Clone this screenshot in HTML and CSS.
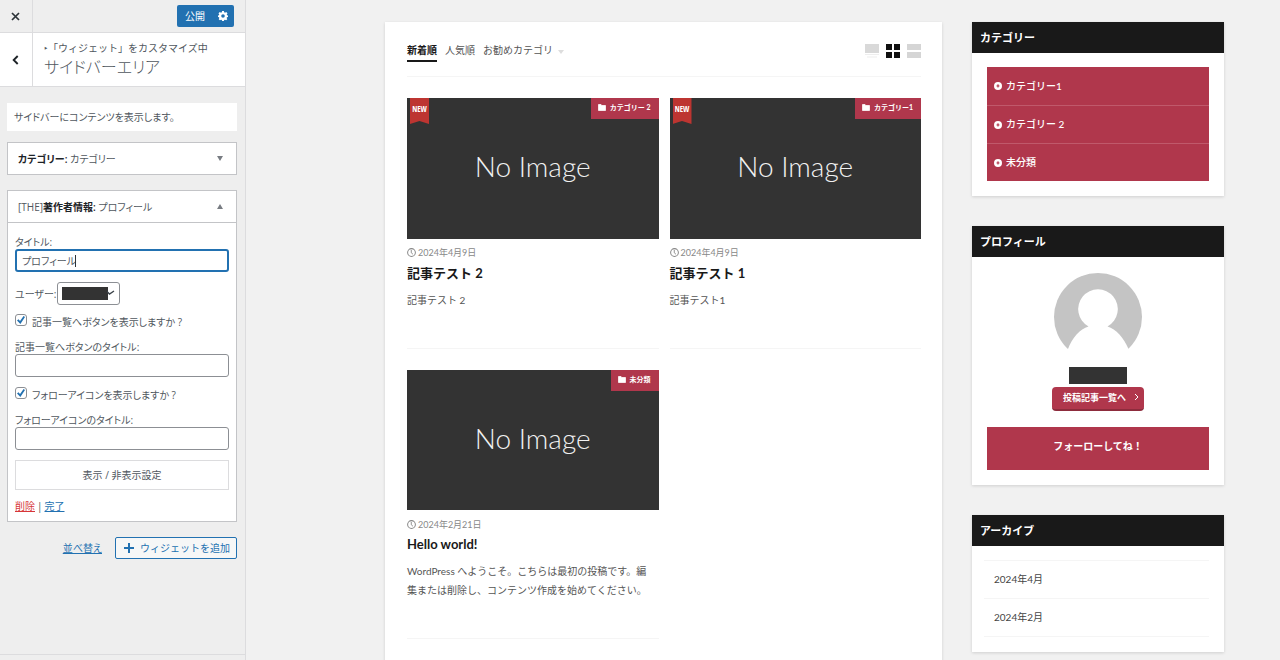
FILE: index.html
```html
<!DOCTYPE html>
<html lang="ja">
<head>
<meta charset="utf-8">
<meta name="viewport" content="width=device-width, initial-scale=1">
<title>カスタマイズ: サイドバーエリア</title>
<link rel="stylesheet" href="styles.css">
</head>
<body>
<svg class="defs" aria-hidden="true">
  <symbol id="folder" viewBox="0 0 16 14"><path d="M1 1h5l2 2h7v10H1z" fill="currentColor" stroke="currentColor" stroke-width="1.5" stroke-linejoin="round"/></symbol>
  <symbol id="clock" viewBox="0 0 16 16"><circle cx="8" cy="8" r="6.9" fill="none" stroke="currentColor" stroke-width="1.8"/><path d="M7.6 3.5v5l3 2.6" fill="none" stroke="currentColor" stroke-width="1.6"/></symbol>
  <symbol id="bullet" viewBox="0 0 16 16"><path fill="currentColor" fill-rule="evenodd" d="M8 0a8 8 0 1 1 0 16A8 8 0 0 1 8 0zM8 5.200a2.800 2.800 0 1 0 0 5.600A2.800 2.800 0 0 0 8 5.200z"/><circle cx="8" cy="8" r="1" fill="currentColor"/></symbol>
</svg>
<div class="app">
  <aside class="controls">
    <header class="controls-bar">
      <button class="close" aria-label="閉じる"><svg width="9" height="9" viewBox="0 0 9 9"><path d="M1 1l7 7M8 1L1 8" stroke="#2c3338" stroke-width="1.700"/></svg></button>
      <div class="publish-group">
        <button class="publish">公開</button>
        <button class="publish-settings" aria-label="公開設定"><svg width="10" height="10" viewBox="0 0 20 20"><path fill="#fff" fill-rule="evenodd" d="M8.200 0h3.600l.6 2.700 1.600.7L16.400 2 19 4.600l-1.500 2.300.6 1.400 1.900.5v3.200l-2.100.6-.6 1.500L18.600 16.300 16.200 18.700l-2.300-1.300-1.500.6-.6 2H8.200l-.6-2-1.500-.6-2.300 1.300L1.400 16.300l1.300-2.200L2.100 12.600 0 12V8.800l1.900-.5.6-1.400L1 4.600 3.600 2 6 3.400l1.600-.7zM10 6.400a3.600 3.600 0 1 0 0 7.200 3.600 3.600 0 0 0 0-7.200z"/></svg></button>
      </div>
    </header>
    <div class="section-head">
      <button class="back" aria-label="戻る"><svg width="7" height="10" viewBox="0 0 7 10"><path d="M5.700 1L1.700 5l4 4" fill="none" stroke="#1d2327" stroke-width="1.900"/></svg></button>
      <div class="section-title">
        <span class="crumb">‣「ウィジェット」をカスタマイズ中</span>
        <h1>サイドバーエリア</h1>
      </div>
    </div>
    <div class="panel">
      <p class="description">サイドバーにコンテンツを表示します。</p>
      <section class="widget">
        <button class="widget-head"><span><b>カテゴリー:</b> カテゴリー</span><i class="tri down"></i></button>
      </section>
      <section class="widget">
        <button class="widget-head" aria-expanded="true"><span>[THE]<b>著作者情報:</b> プロフィール</span><i class="tri up"></i></button>
        <form class="widget-form">
          <div class="field">
            <label for="title">タイトル:</label>
            <div class="focus-box"><input class="text focused" id="title" type="text" value="プロフィール"><span class="caret"></span></div>
          </div>
          <div class="user-row">
            <label for="user">ユーザー:</label>
            <span class="select-box"><select id="user"><option></option></select><span class="mask"></span><svg width="9" height="6" viewBox="0 0 9 6"><path d="M1 1.500l2.500 2.500L8 1" fill="none" stroke="#3c434a" stroke-width="1.400"/></svg></span>
          </div>
          <label class="check"><input type="checkbox" checked> 記事一覧へボタンを表示しますか ?</label>
          <div class="field">
            <label for="list-title">記事一覧へボタンのタイトル:</label>
            <input class="text" id="list-title" type="text">
          </div>
          <label class="check"><input type="checkbox" checked> フォローアイコンを表示しますか ?</label>
          <div class="field">
            <label for="follow-title">フォローアイコンのタイトル:</label>
            <input class="text" id="follow-title" type="text">
          </div>
          <button class="visibility" type="button">表示 / 非表示設定</button>
          <p class="actions"><a class="delete" href="#">削除</a><span class="sep">|</span><a href="#">完了</a></p>
        </form>
      </section>
      <div class="panel-foot">
        <a href="#">並べ替え</a>
        <button class="add"><svg width="10" height="10" viewBox="0 0 10 10"><path d="M5 0v10M0 5h10" stroke="#2271b1" stroke-width="2"/></svg>ウィジェットを追加</button>
      </div>
    </div>
    <footer class="controls-foot"></footer>
  </aside>

  <div class="preview">
    <main class="posts">
      <div class="toolbar">
        <nav class="tabs">
          <a class="active" href="#">新着順</a>
          <a href="#">人気順</a>
          <a href="#">お勧めカテゴリ<i class="tab-arrow"></i></a>
        </nav>
        <div class="views">
          <button aria-label="カード"><svg width="14" height="14" viewBox="0 0 14 14"><path d="M0 0h14v9H0z" fill="#d9d9d9"/><path d="M0 10h14v1H0zM2 12.500h10v1H2z" fill="#eee"/></svg></button>
          <button aria-label="グリッド"><svg width="14" height="14" viewBox="0 0 14 14"><path d="M0 0h6v6H0zM8 0h6v6H8zM0 8h6v6H0zM8 8h6v6H8z" fill="#111"/></svg></button>
          <button aria-label="リスト"><svg width="14" height="14" viewBox="0 0 14 14"><path d="M0 0h14v6H0zM0 8h14v6H0z" fill="#d5d5d5"/></svg></button>
        </div>
      </div>
      <div class="grid">
        <article class="post">
          <a class="thumb" href="#">No Image<span class="ribbon">NEW</span><span class="cat"><svg><use href="#folder"/></svg>カテゴリー 2</span></a>
          <p class="date"><svg><use href="#clock"/></svg>2024年4月9日</p>
          <h2>記事テスト 2</h2>
          <p class="excerpt">記事テスト 2</p>
        </article>
        <article class="post">
          <a class="thumb" href="#">No Image<span class="ribbon">NEW</span><span class="cat"><svg><use href="#folder"/></svg>カテゴリー1</span></a>
          <p class="date"><svg><use href="#clock"/></svg>2024年4月9日</p>
          <h2>記事テスト 1</h2>
          <p class="excerpt">記事テスト1</p>
        </article>
        <article class="post">
          <a class="thumb" href="#">No Image<span class="cat"><svg><use href="#folder"/></svg>未分類</span></a>
          <p class="date"><svg><use href="#clock"/></svg>2024年2月21日</p>
          <h2>Hello world!</h2>
          <p class="excerpt">WordPress へようこそ。こちらは最初の投稿です。編集または削除し、コンテンツ作成を始めてください。</p>
        </article>
      </div>
    </main>
    <aside class="side">
      <section class="box">
        <h2>カテゴリー</h2>
        <ul class="cats">
          <li><a href="#"><svg><use href="#bullet"/></svg>カテゴリー1</a></li>
          <li><a href="#"><svg><use href="#bullet"/></svg>カテゴリー 2</a></li>
          <li><a href="#"><svg><use href="#bullet"/></svg>未分類</a></li>
        </ul>
      </section>
      <section class="box">
        <h2>プロフィール</h2>
        <div class="profile">
          <svg class="avatar" width="88" height="88" viewBox="0 0 88 88"><circle cx="44" cy="44" r="44" fill="#c4c4c4"/><path d="M10 88Q10 76 14 76C18 65 26 56 34.500 53.500A19.800 19.800 0 1 1 53.500 53.500C62 56 70 65 74.500 76L88 76V88H0V76H13.500z" fill="#fff"/></svg>
          <span class="name-mask"></span>
          <a class="author-link" href="#">投稿記事一覧へ<svg width="5" height="8" viewBox="0 0 5 8"><path d="M1 1l3 3-3 3" fill="none" stroke="#fff"/></svg></a>
          <p class="follow">フォーローしてね！</p>
        </div>
      </section>
      <section class="box">
        <h2>アーカイブ</h2>
        <ul class="archive">
          <li><a href="#">2024年4月</a></li>
          <li><a href="#">2024年2月</a></li>
        </ul>
      </section>
    </aside>
  </div>
</div>
</body>
</html>
```
FILE: styles.css
```css
* { box-sizing: border-box; margin: 0; padding: 0; }
body { background: #f0f0f1; overflow: hidden; }
button, input, select { font: inherit; color: inherit; }
button { background: none; border: 0; cursor: pointer; }
ul { list-style: none; }
.defs { position: absolute; width: 0; height: 0; }
.app { display: flex; height: 100vh; }

/* Customizer controls */
.controls {
  flex: 0 0 246px;
  display: flex;
  flex-direction: column;
  border-right: 1px solid #dcdcde;
  background: #eee;
  color: #50575e;
  font: 10px/14px "Open Sans", "Noto Sans CJK JP", sans-serif;
  font-feature-settings: "palt";
}
.controls a { color: #2271b1; }
.controls-bar {
  display: flex;
  justify-content: space-between;
  align-items: center;
  height: 33px;
  padding-right: 11px;
  border-bottom: 1px solid #dcdcde;
}
.close, .back {
  display: grid;
  place-items: center;
  align-self: stretch;
  width: 33px;
  border-right: 1px solid #dcdcde;
}
.close svg, .back svg { margin-right: 2px; }
.publish-group {
  display: flex;
  height: 22px;
  border-radius: 2px;
  background: #2271b1;
  color: #fff;
}
.publish { padding: 0 7px 0 8px; }
.publish-settings { display: grid; place-items: center; width: 22px; }
.section-head {
  display: flex;
  height: 54px;
  background: #fff;
  border-bottom: 1px solid #dcdcde;
}
.section-title { padding: 8px 0 0 11px; }
.crumb { display: block; font-feature-settings: normal; }
.section-title h1 { font-size: 16px; line-height: 24px; font-weight: 300; }
.panel { flex: 1; padding: 16px 8px 0 7px; }
.description {
  padding: 7px;
  margin-bottom: 11px;
  background: #fff;
}
.widget {
  margin-bottom: 15px;
  border: 1px solid #c3c4c7;
  background: #fff;
}
.widget-head {
  display: flex;
  justify-content: space-between;
  align-items: center;
  width: 100%;
  height: 31px;
  padding: 0 13px 0 10px;
}
.widget-head b { color: #1d2327; font-weight: 600; }
.tri { border: 3px solid transparent; }
.tri.down { border-top: 5px solid #787c82; border-bottom: 0; }
.tri.up { border-bottom: 5px solid #787c82; border-top: 0; }
.widget-form {
  padding: 12px 7px 8px;
  border-top: 1px solid #c3c4c7;
}
.field label { display: block; }
.text {
  display: block;
  width: 100%;
  height: 23px;
  padding: 0 6px;
  border: 1px solid #8c8f94;
  border-radius: 3px;
  background: #fff;
}
.focus-box { position: relative; }
.focused { padding: 0 5px; border: 2px solid #2271b1; outline: 0; }
.caret {
  position: absolute;
  left: 60px;
  top: 6px;
  width: 1px;
  height: 12px;
  background: #2c3338;
}
.user-row { display: flex; align-items: center; margin: 10px 0 9px; }
.select-box { position: relative; }
.select-box select {
  display: block;
  appearance: none;
  width: 63px;
  height: 23px;
  border: 1px solid #8c8f94;
  border-radius: 3px;
  background: #fff;
}
.mask {
  position: absolute;
  left: 5px;
  top: 5px;
  width: 46px;
  height: 13px;
  background: #333;
}
.select-box svg { position: absolute; right: 5px; top: 8px; }
.check { display: flex; align-items: center; gap: 5px; height: 15px; margin-bottom: 11px; }
.check input {
  display: grid;
  place-items: center;
  appearance: none;
  width: 12px;
  height: 12px;
  margin-bottom: 3px;
  border: 1px solid #8c8f94;
  border-radius: 3px;
  background: #fff;
}
.check input:checked::before {
  content: "";
  width: 8px;
  height: 8px;
  background: #2271b1;
  clip-path: polygon(0 55%, 18% 40%, 38% 64%, 82% 0, 100% 14%, 42% 100%);
}
.field + .check { margin-top: 10px; }
.visibility {
  width: 100%;
  height: 30px;
  margin: 10px 0 9px;
  border: 1px solid #dcdcde;
}
.controls .delete { color: #d63638; }
.sep { margin: 0 2px; }
.panel-foot { display: flex; justify-content: flex-end; align-items: center; gap: 13px; }
.add {
  display: flex;
  align-items: center;
  gap: 6px;
  height: 22px;
  padding: 0 6px 0 8px;
  border: 1px solid #2271b1;
  border-radius: 2px;
  background: #f6f7f7;
  color: #2271b1;
  font-feature-settings: normal;
}
.controls-foot { height: 6px; border-top: 1px solid #dcdcde; }

/* Site preview */
.preview {
  flex: 1;
  display: flex;
  align-items: flex-start;
  gap: 30px;
  padding: 22px 56px 0 139px;
  background: #f1f1f1;
  color: #555;
  font: 10px/19px Lato, "Noto Sans CJK JP", sans-serif;
}
.preview a { color: inherit; text-decoration: none; }
.posts, .box { background: #fff; box-shadow: 0 1px 3px rgba(0, 0, 0, .14); }
.posts { flex: 1; min-height: 100vh; padding: 18px 21px 18px 22px; }
.toolbar {
  display: flex;
  justify-content: space-between;
  align-items: center;
  height: 37px;
  margin-bottom: 21px;
  padding-bottom: 14px;
  border-bottom: 1px solid #f5f5f5;
}
.tabs { display: flex; gap: 8px; }
.tabs a { height: 21px; }
.tabs .active { color: #191919; font-weight: 700; border-bottom: 2px solid #191919; }
.tab-arrow {
  display: inline-block;
  margin-left: 5px;
  border: 3px solid transparent;
  border-top: 4px solid #ddd;
  border-bottom: 0;
}
.views { display: flex; gap: 7px; }
.views svg { display: block; }
.grid { display: grid; grid-template-columns: 1fr 1fr; gap: 21px 11px; }
.post { padding-bottom: 38px; border-bottom: 1px solid #f5f5f5; }
.thumb {
  position: relative;
  display: grid;
  place-items: center;
  aspect-ratio: 252 / 141;
  padding-bottom: 4px;
  background: #333;
  font-size: 28px;
  font-weight: 300;
}
.preview .thumb { color: #f1f1f1; }
.ribbon {
  position: absolute;
  left: 3px;
  top: 0;
  width: 19px;
  height: 26px;
  background: #bd3531;
  color: #fff;
  clip-path: polygon(0 0, 100% 0, 100% 100%, 50% 88%, 0 100%);
  font: 700 8px/22px "Liberation Sans Narrow", "Open Sans Condensed", sans-serif;
  text-align: center;
}
.cat {
  position: absolute;
  right: 0;
  top: 0;
  display: flex;
  align-items: center;
  gap: 4px;
  height: 21px;
  padding: 0 8px 2px 7px;
  background: #b0374c;
  color: #fff;
  font-size: 7px;
  font-weight: 700;
}
.cat svg { width: 8px; height: 7px; }
.date {
  display: flex;
  align-items: center;
  gap: 2px;
  height: 12px;
  margin-top: 8px;
  color: #888;
  font-size: 9px;
}
.date svg { width: 9px; height: 9px; }
.post h2 {
  margin: 4px 0 8px;
  color: #191919;
  font-size: 13px;
  line-height: 20px;
  font-weight: 700;
}
.excerpt { padding-right: 5px; }

.side { flex: 0 0 252px; }
.box { margin-bottom: 30px; padding-bottom: 15px; }
.box h2 {
  padding: 6px 8px;
  background: #191919;
  color: #fff;
  font-size: 11px;
  line-height: 19px;
  font-weight: 700;
}
.cats { margin: 14px 15px 0; background: #b0374c; color: #fff; font-weight: 500; }
.cats li + li { border-top: 1px solid #c0596b; }
.cats a { display: flex; align-items: center; gap: 4px; height: 38px; padding: 0 7px; }
.cats li + li a { height: 37px; }
.cats svg { width: 8px; height: 8px; }
.profile { display: flex; flex-direction: column; align-items: center; padding: 16px 15px 0; }
.name-mask { width: 58px; height: 17px; margin: 6px 0 3px; background: #333; }
.author-link {
  display: flex;
  align-items: center;
  gap: 8px;
  height: 24px;
  padding: 0 5px 2px 11px;
  border-bottom: 2px solid #8d2c3d;
  border-radius: 4px;
  background: #b0374c;
  font-size: 9px;
  font-weight: 700;
}
.preview .author-link { color: #fff; }
.follow {
  align-self: stretch;
  margin-top: 16px;
  padding: 10px 0 14px;
  background: #b0374c;
  color: #fff;
  font-weight: 700;
  text-align: center;
}
.archive { margin: 14px 15px 0 12px; border-top: 1px solid #f5f5f5; color: #444; }
.archive li { padding: 9px 10px; border-bottom: 1px solid #f5f5f5; }
```
